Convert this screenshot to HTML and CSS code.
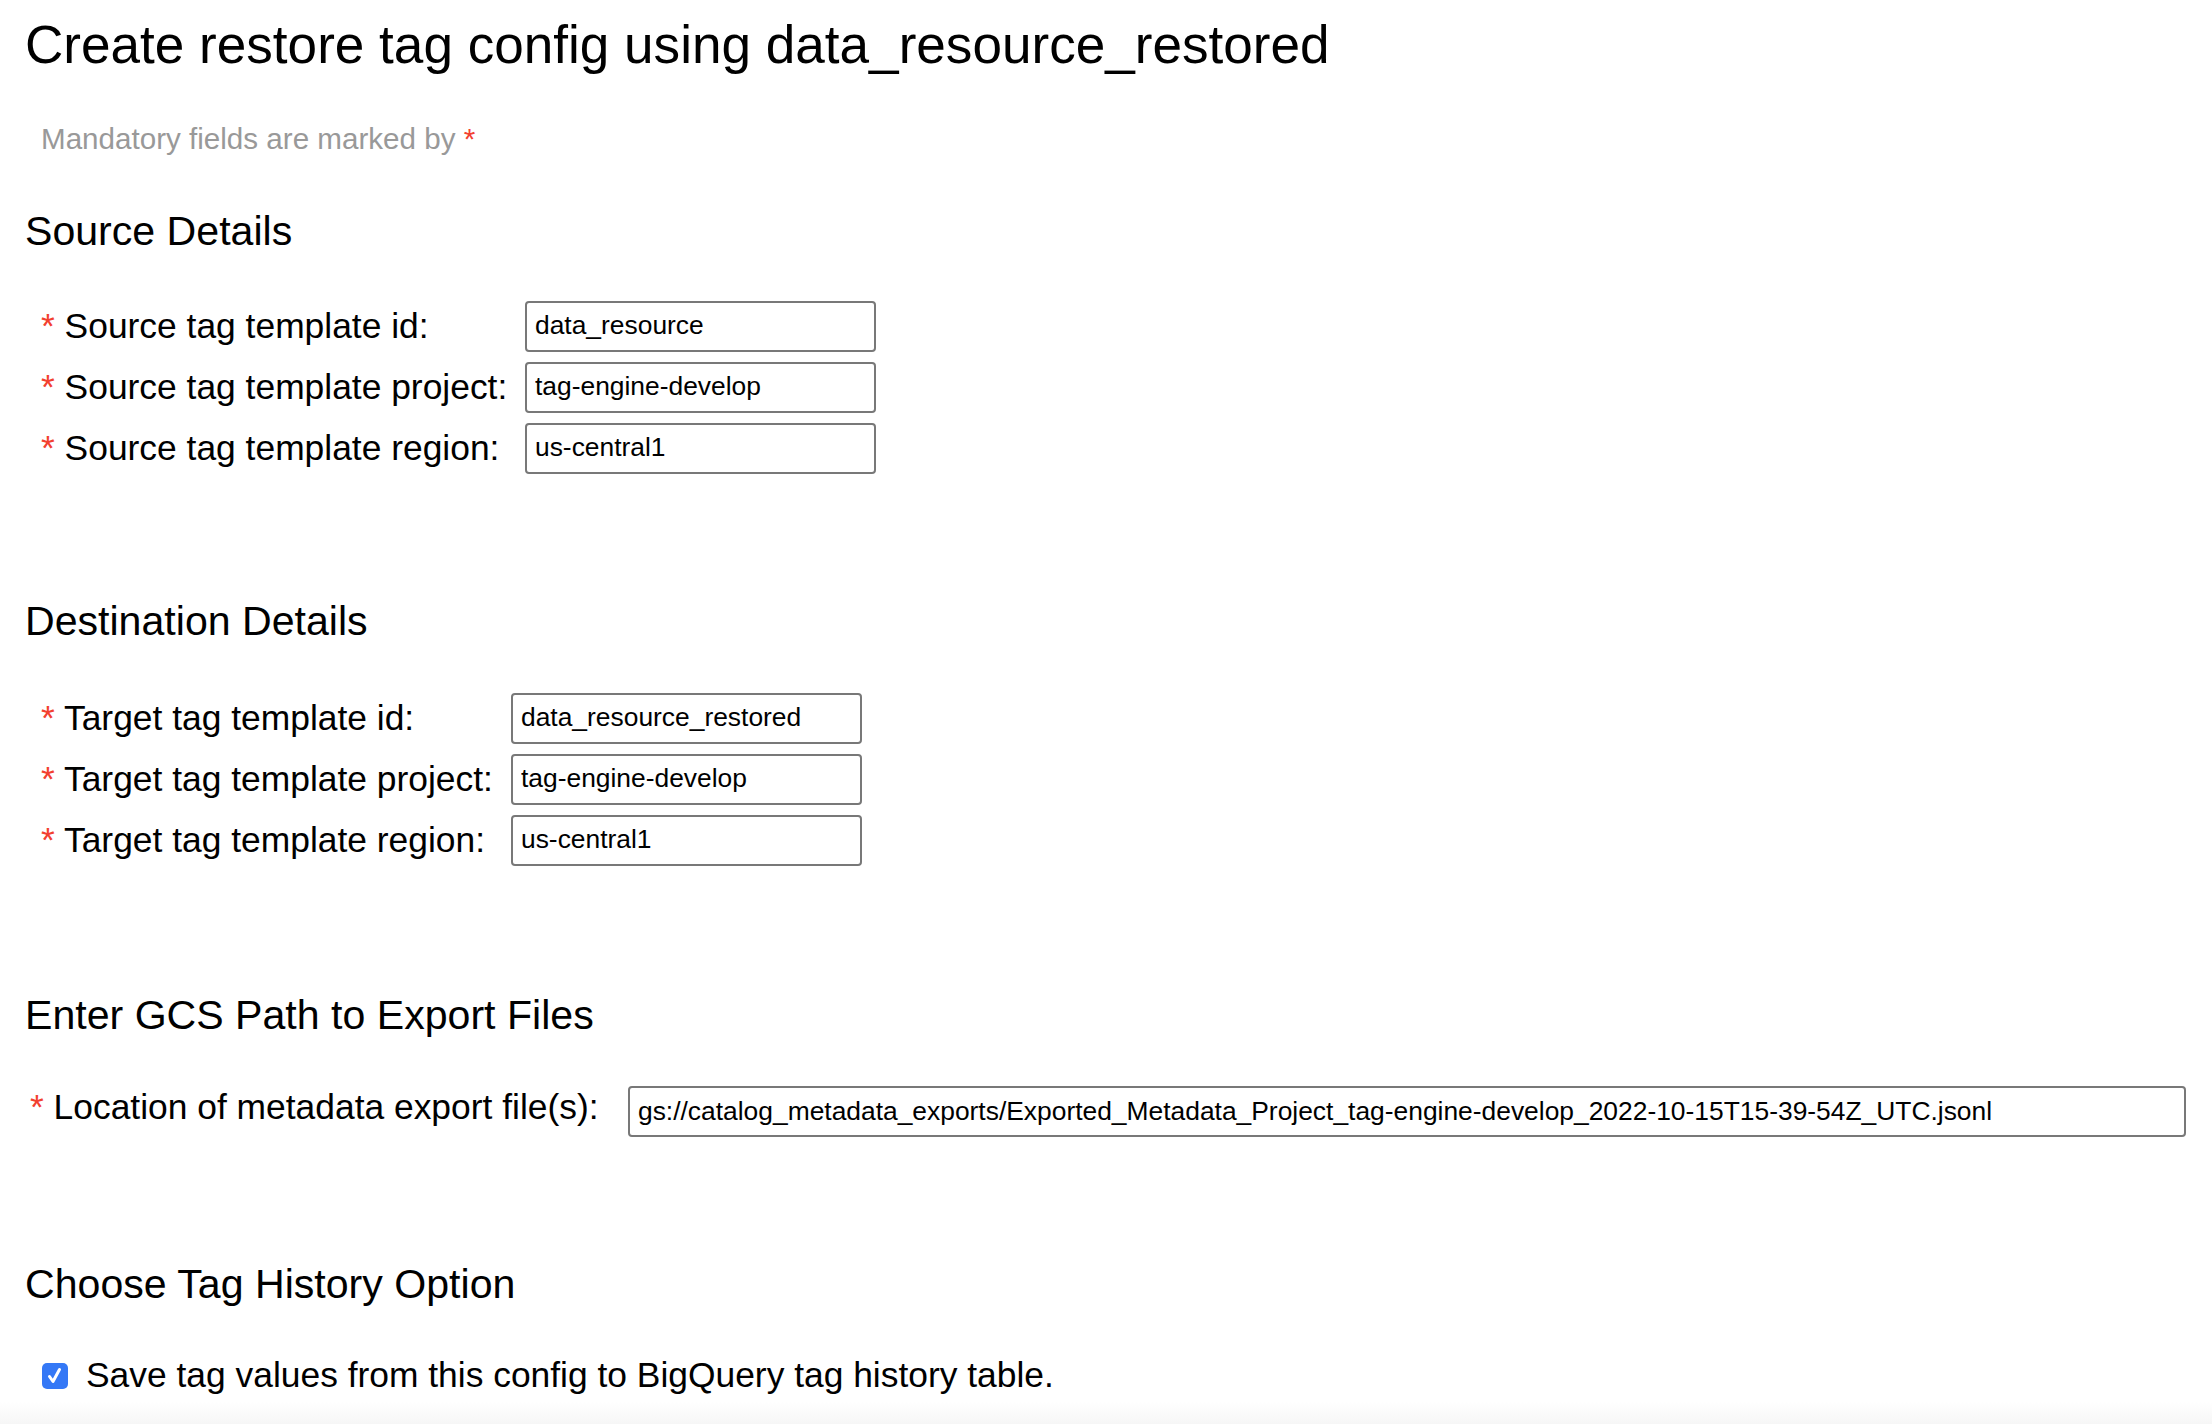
FILE: index.html
```html
<!DOCTYPE html>
<html lang="en">
<head>
<meta charset="utf-8">
<title>Create restore tag config</title>
<link rel="stylesheet" href="styles.css">
</head>
<body>
<main class="page">
  <h1 class="title">Create restore tag config using data_resource_restored</h1>
  <p class="note">Mandatory fields are marked by <span class="req">*</span></p>

  <section class="section section-src">
    <h2 class="section-title">Source Details</h2>
    <div class="fields fields-src">
      <label class="field-label"><span class="req">*</span> Source tag template id:</label>
      <input class="field-input" type="text" value="data_resource">
      <label class="field-label"><span class="req">*</span> Source tag template project:</label>
      <input class="field-input" type="text" value="tag-engine-develop">
      <label class="field-label"><span class="req">*</span> Source tag template region:</label>
      <input class="field-input" type="text" value="us-central1">
    </div>
  </section>

  <section class="section section-dst">
    <h2 class="section-title">Destination Details</h2>
    <div class="fields fields-dst">
      <label class="field-label"><span class="req">*</span> Target tag template id:</label>
      <input class="field-input" type="text" value="data_resource_restored">
      <label class="field-label"><span class="req">*</span> Target tag template project:</label>
      <input class="field-input" type="text" value="tag-engine-develop">
      <label class="field-label"><span class="req">*</span> Target tag template region:</label>
      <input class="field-input" type="text" value="us-central1">
    </div>
  </section>

  <section class="section section-gcs">
    <h2 class="section-title">Enter GCS Path to Export Files</h2>
    <div class="fields fields-gcs">
      <label class="field-label field-label-top"><span class="req">*</span> Location of metadata export file(s):</label>
      <input class="field-input field-input-wide" type="text" value="gs://catalog_metadata_exports/Exported_Metadata_Project_tag-engine-develop_2022-10-15T15-39-54Z_UTC.jsonl">
    </div>
  </section>

  <section class="section section-hist">
    <h2 class="section-title">Choose Tag History Option</h2>
    <div class="history">
      <span class="check" aria-hidden="true">
        <svg width="26" height="26" viewBox="0 0 26 26">
          <rect x="0" y="0" width="26" height="26" rx="5" fill="#3478f6"/>
          <path d="M7.5 13.5 L11 18.5 L17.5 6.5" fill="none" stroke="#ffffff" stroke-width="3" stroke-linecap="round" stroke-linejoin="round"/>
        </svg>
      </span>
      <span class="history-label">Save tag values from this config to BigQuery tag history table.</span>
    </div>
  </section>
</main>
</body>
</html>
```

FILE: styles.css
```css
html, body {
  margin: 0;
  padding: 0;
}

body {
  font-family: "Liberation Sans", Arial, Helvetica, sans-serif;
  color: #000;
  background: #fff;
}

.page {
  box-sizing: border-box;
  min-height: 100vh;
  padding: 15px 0 0 25px;
  background: linear-gradient(to bottom, #ffffff calc(100% - 22px), #f6f6f6);
}

.title {
  margin: 0;
  font-size: 53.1px;
  line-height: 60px;
  font-weight: 400;
  white-space: nowrap;
}

.note {
  margin: 47px 0 0;
  padding-left: 16px;
  font-size: 29.6px;
  line-height: 34px;
  color: #999;
}

.req {
  color: #f2402f;
}

.section-title {
  margin: 0;
  font-size: 41.1px;
  line-height: 48px;
  font-weight: 400;
}

.section-src { margin-top: 51px; }
.section-dst { margin-top: 123px; }
.section-gcs { margin-top: 125px; }
.section-hist { margin-top: 123px; }

.fields {
  display: grid;
  row-gap: 10px;
  align-items: start;
  padding-left: 16px;
}

.fields-src {
  margin-top: 46px;
  grid-template-columns: 484px 351px;
}

.fields-dst {
  margin-top: 48px;
  grid-template-columns: 470px 351px;
}

.fields-gcs {
  margin-top: 47px;
  padding-left: 5px;
  grid-template-columns: 598px 1558px;
}

.field-label {
  font-size: 35.4px;
  line-height: 51px;
  white-space: nowrap;
}

.field-label-top {
  line-height: 43px;
}

.field-input {
  box-sizing: border-box;
  width: 100%;
  height: 51px;
  margin: 0;
  padding: 0 8px 3px;
  border: 2px solid #787878;
  border-radius: 4px;
  background: #fff;
  color: #000;
  font-family: inherit;
  font-size: 26.4px;
  outline: none;
}

.field-input-wide {
  padding-bottom: 0;
}

.history {
  display: flex;
  align-items: flex-start;
  gap: 18px;
  margin-top: 55px;
  padding-left: 17px;
}

.check {
  display: block;
  width: 26px;
  height: 26px;
}

.check svg {
  display: block;
}

.history-label {
  font-size: 35.4px;
  line-height: 24px;
  white-space: nowrap;
}
```
